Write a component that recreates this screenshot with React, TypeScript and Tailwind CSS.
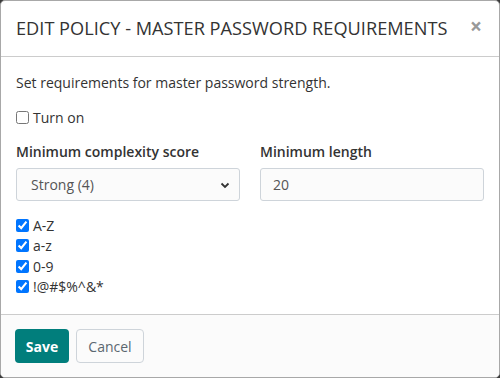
import React from "react";

function Check({ label, checked }: { label: string; checked?: boolean }) {
  return (
    <label className="flex items-center h-[20.33px] text-[14px] text-[#333333]">
      <input type="checkbox" defaultChecked={checked} className="w-[13px] h-[13px] m-0 mr-[4px]" />
      <span>{label}</span>
    </label>
  );
}

export default function App() {
  return (
    <div className="w-[500px] h-[378px] bg-[#3a3a3a]" style={{ fontFamily: '"Open Sans", sans-serif' }}>
      <div className="w-full h-full flex flex-col bg-white border border-[#a8a8a8] rounded-[5px] overflow-hidden">
        <div className="h-[56px] shrink-0 flex items-center justify-between pl-[15px] pr-[15px] border-b border-[#cccccc]">
          <h5 className="text-[18.2px] font-normal text-[#333333] leading-none">EDIT POLICY - MASTER PASSWORD REQUIREMENTS</h5>
          <span className="text-[21px] font-bold text-[#999999] leading-none -mt-[4px] mr-[2px]">×</span>
        </div>
        <div className="flex-1 px-[15px] pt-[15px] text-[14px] leading-[21px] text-[#333333]">
          <p className="mb-[14px]">Set requirements for master password strength.</p>
          <div className="mb-[14px]">
            <Check label="Turn on" />
          </div>
          <div className="grid grid-cols-2 gap-[20px] mb-[14px]">
            <div>
              <div className="font-semibold mb-[6px]">Minimum complexity score</div>
              <div className="relative h-[33px] border border-[#ced4da] rounded-[3px] bg-[#fbfbfb] flex items-center pl-[14px] text-[#555555]">
                <span>Strong (4)</span>
                <svg className="absolute right-[9px] top-[13px]" width="10" height="7" viewBox="0 0 10 7">
                  <path d="M1.5 1.5 L5 5 L8.5 1.5" fill="none" stroke="#333" strokeWidth="1.8" />
                </svg>
              </div>
            </div>
            <div>
              <div className="font-semibold mb-[6px]">Minimum length</div>
              <div className="h-[33px] border border-[#ced4da] rounded-[3px] bg-[#fbfbfb] flex items-center pl-[12px] text-[#555555]">
                <span>20</span>
              </div>
            </div>
          </div>
          <div className="mt-[0.5px]">
            <Check label="A-Z" checked />
            <Check label="a-z" checked />
            <Check label="0-9" checked />
            <Check label="!@#$%^&*" checked />
          </div>
        </div>
        <div className="shrink-0 h-[63px] border-t border-[#cccccc] bg-[#fbfbfb] flex items-center gap-[7px] px-[14px]">
          <button className="h-[34px] w-[54px] rounded-[4px] bg-[#017e7c] text-white font-bold text-[14px]">Save</button>
          <button className="h-[34px] w-[68px] rounded-[4px] border border-[#ced4da] bg-[#fbfbfb] text-[#5b6770] text-[14px]">Cancel</button>
        </div>
      </div>
    </div>
  );
}
